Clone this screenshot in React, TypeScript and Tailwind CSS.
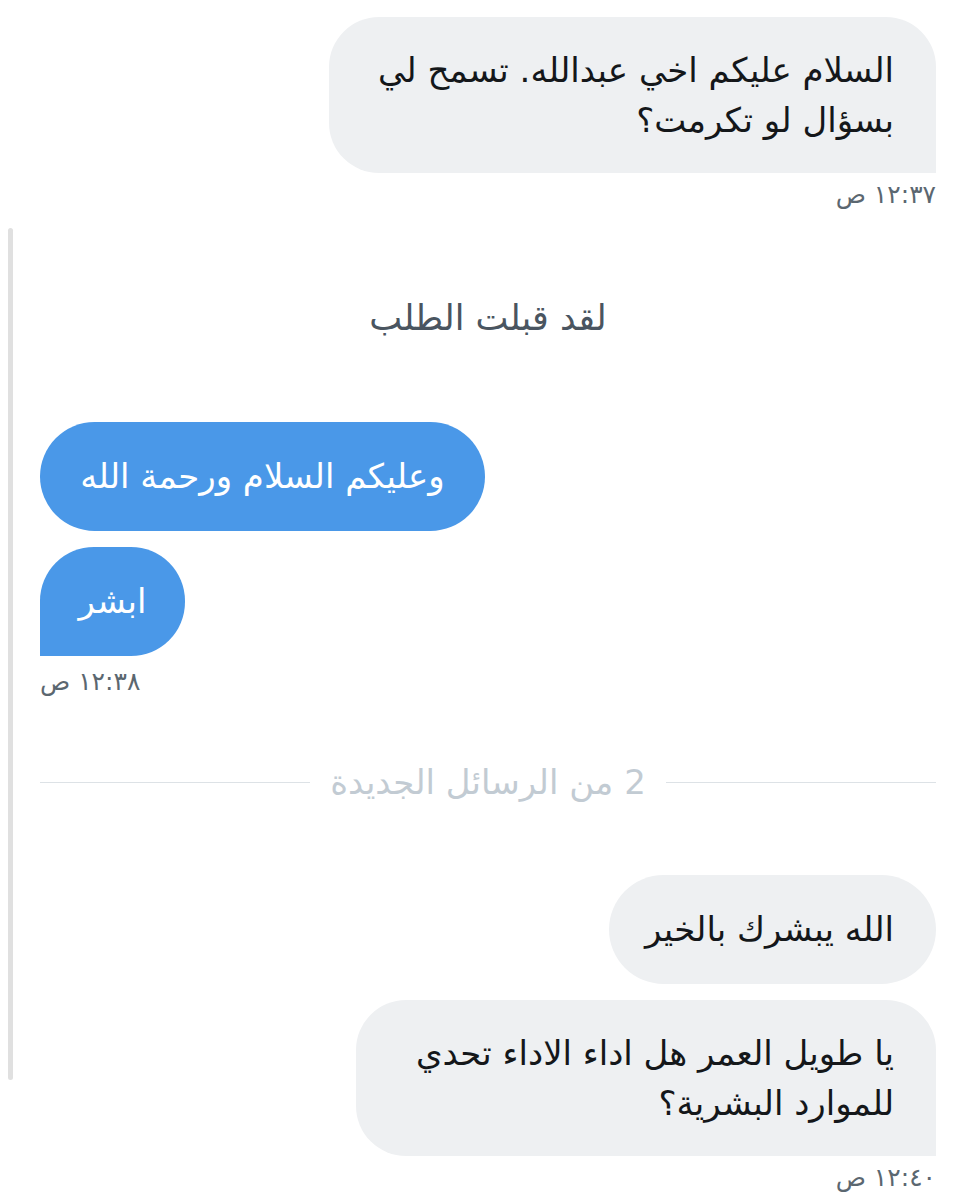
const arabic = { fontFamily: '"DejaVu Sans", "Noto Sans", sans-serif' }

function Stamp({ text, side }: { text: string; side: 'left' | 'right' }) {
  return (
    <div
      dir="rtl"
      className={`text-[25px] leading-[28px] text-[#5b6770] ${side === 'right' ? 'self-end' : 'self-start'}`}
    >
      {text}
    </div>
  )
}

export default function App() {
  return (
    <div className="relative w-[976px] h-[1200px] bg-white overflow-hidden" style={arabic}>
      {/* scroll indicator */}
      <div className="absolute left-[8px] top-[228px] w-[5px] h-[852px] rounded-full bg-[#e0e0e0]" />

      <div className="flex flex-col px-[40px] pt-[17px]">
        <div
          dir="rtl"
          className="self-end w-[607px] bg-[#eef0f2] rounded-[50px] rounded-br-none px-[42px] py-[28px] text-[34px] leading-[50px] text-[#14171a] whitespace-nowrap"
        >
          السلام عليكم اخي عبدالله. تسمح لي
          <br />
          بسؤال لو تكرمت؟
        </div>
        <div className="mt-[8px] flex flex-col">
          <Stamp text="١٢:٣٧ ص" side="right" />
        </div>

        <div dir="rtl" className="mt-[90px] text-center text-[35px] leading-[38px] text-[#4a5560]">
          لقد قبلت الطلب
        </div>

        <div
          dir="rtl"
          className="mt-[85px] self-start w-[445px] h-[109px] bg-[#4a98e8] rounded-full flex items-center justify-center text-[34px] text-white whitespace-nowrap"
        >
          وعليكم السلام ورحمة الله
        </div>
        <div
          dir="rtl"
          className="mt-[16px] self-start w-[145px] h-[109px] bg-[#4a98e8] rounded-[54px] rounded-bl-none flex items-center justify-center text-[34px] text-white"
        >
          ابشر
        </div>
        <div className="mt-[12px] flex">
          <Stamp text="١٢:٣٨ ص" side="left" />
        </div>

        <div className="mt-[67px] flex items-center gap-[20px]">
          <div className="flex-1 h-px bg-[#dde2e6]" />
          <div dir="rtl" className="text-[34px] leading-[38px] text-[#c2cbd3] whitespace-nowrap">
            2 من الرسائل الجديدة
          </div>
          <div className="flex-1 h-px bg-[#dde2e6]" />
        </div>

        <div
          dir="rtl"
          className="mt-[74px] self-end w-[327px] h-[109px] bg-[#eef0f2] rounded-full flex items-center px-[42px] text-[34px] text-[#14171a] whitespace-nowrap"
        >
          الله يبشرك بالخير
        </div>
        <div
          dir="rtl"
          className="mt-[16px] self-end w-[580px] bg-[#eef0f2] rounded-[50px] rounded-br-none px-[42px] py-[28px] text-[34px] leading-[50px] text-[#14171a] whitespace-nowrap"
        >
          يا طويل العمر هل اداء الاداء تحدي
          <br />
          للموارد البشرية؟
        </div>
        <div className="mt-[8px] flex flex-col">
          <Stamp text="١٢:٤٠ ص" side="right" />
        </div>
      </div>
    </div>
  )
}
